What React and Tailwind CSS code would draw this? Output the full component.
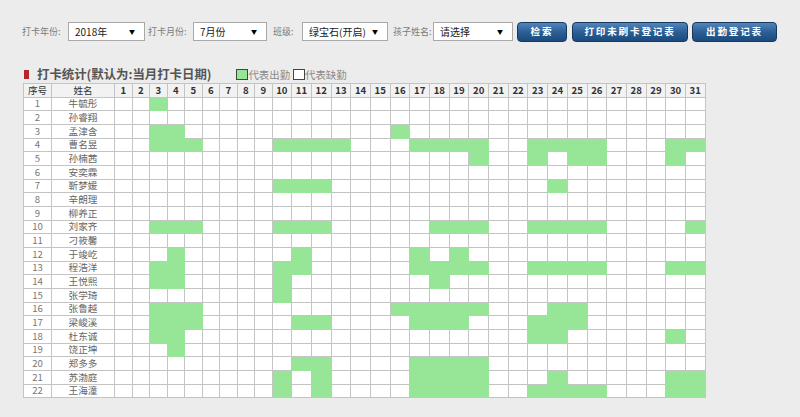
const DAYS = Array.from({ length: 31 }, (_, i) => i + 1);

const ROWS = [
  ['牛毓彤', [3]],
  ['孙睿翔', []],
  ['孟津含', [3, 4, 16]],
  ['曹名昱', [3, 4, 5, 10, 11, 12, 13, 17, 18, 19, 20, 23, 24, 25, 26, 30, 31]],
  ['孙楠茜', [20, 23, 25, 26, 30]],
  ['安奕霖', []],
  ['靳梦媛', [10, 11, 12, 24]],
  ['辛朗理', []],
  ['柳养正', []],
  ['刘家齐', [3, 4, 5, 10, 11, 12, 18, 19, 20, 23, 24, 25, 26, 31]],
  ['刁筱馨', []],
  ['于竣屹', [4, 11, 17, 19]],
  ['程浩洋', [3, 4, 10, 11, 17, 18, 19, 20, 23, 24, 25, 26, 30, 31]],
  ['王悦熙', [3, 4, 10, 18]],
  ['张学琦', [10]],
  ['张鲁越', [3, 4, 5, 16, 17, 18, 19, 20, 24, 25]],
  ['梁峻溪', [3, 4, 5, 11, 12, 17, 18, 19, 23, 24, 25]],
  ['杜东诚', [3, 4, 23, 24, 30]],
  ['饶正坤', [4]],
  ['郑多多', [11, 12, 17, 18, 19, 20]],
  ['苏渤庭', [10, 12, 17, 18, 19, 20, 24, 30, 31]],
  ['王海潼', [10, 12, 17, 18, 19, 20, 23, 24, 25, 26, 30, 31]],
];

function FakeSelect({ value, className }) {
  return (
    <div className={`h-[19px] bg-white border border-[#a9a9a9] flex items-center justify-between pl-[6px] pr-[9px] text-[10px] text-[#1a1a1a] ${className}`}>
      <span>{value}</span>
      <span className="text-[6px] text-black">▼</span>
    </div>
  );
}

function BlueButton({ children, className }) {
  return (
    <button className={`h-[20px] rounded-[4px] border border-[#17395e] bg-linear-to-b from-[#5185bb] via-[#2b5f95] to-[#1c4a7c] text-white text-[9.6px] font-semibold tracking-[1.8px] flex items-center justify-center ${className}`}>
      {children}
    </button>
  );
}

const cell = 'border-r border-b flex items-center justify-center';

export default function App() {
  return (
    <div className="w-[800px] h-[417px] bg-[#ececec] overflow-hidden font-['Noto_Sans_CJK_SC',sans-serif]">
      <div className="flex items-center pt-[22px] pl-[22px] h-[41px] text-[9px] text-[#7a7a7a] whitespace-nowrap">
        <span className="w-[46px]">打卡年份:</span>
        <FakeSelect value="2018年" className="w-[77px]" />
        <span className="ml-[3px] w-[45px]">打卡月份:</span>
        <FakeSelect value="7月份" className="w-[74px]" />
        <span className="ml-[6px] w-[29px]">班级:</span>
        <FakeSelect value="绿宝石(开启)" className="w-[86px]" />
        <span className="ml-[5px] w-[40px]">孩子姓名:</span>
        <FakeSelect value="请选择" className="w-[80px]" />
        <BlueButton className="ml-[4px] w-[50px]">检索</BlueButton>
        <BlueButton className="ml-[5px] w-[116px]">打印未刷卡登记表</BlueButton>
        <BlueButton className="ml-[4px] w-[85px]">出勤登记表</BlueButton>
      </div>

      <div className="mt-[25px] h-[17px] flex items-center pl-[24px] whitespace-nowrap">
        <span className="w-[5px] h-[9px] bg-[#b3262b]" />
        <span className="ml-[8px] text-[12.4px] font-bold text-[#555]">打卡统计(默认为:当月打卡日期)</span>
        <span className="ml-[25px] w-[12px] h-[11px] bg-[#97e597] border border-[#444]" />
        <span className="text-[10.4px] text-[#8a8a8a]">代表出勤</span>
        <span className="ml-[3px] w-[12px] h-[11px] bg-white border border-[#444]" />
        <span className="text-[10.4px] text-[#8a8a8a]">代表缺勤</span>
      </div>

      <div className="ml-[23px] w-max grid grid-cols-[28px_63px_repeat(9,17.5px)_repeat(22,19.7px)] auto-rows-[13.68px] border-l border-t border-[#c4c4c4] bg-white text-[9.6px] leading-none">
        <div className={`${cell} border-[#c4c4c4] bg-[#f2f2f2] text-[#333]`}>序号</div>
        <div className={`${cell} border-[#c4c4c4] bg-[#f2f2f2] text-[#333]`}>姓名</div>
        {DAYS.map((d) => (
          <div key={d} className={`${cell} border-[#c4c4c4] bg-[#f2f2f2] text-[#333] font-bold`}>
            {d}
          </div>
        ))}
        {ROWS.map(([name, days], i) => (
          <div key={name} className="contents">
            <div className={`${cell} border-[#c4c4c4] text-[#777]`}>{i + 1}</div>
            <div className={`${cell} border-[#c4c4c4] text-[#666]`}>{name}</div>
            {DAYS.map((d) =>
              days.includes(d) ? (
                <div key={d} className={`${cell} border-[#97e597] bg-[#97e597]`} />
              ) : (
                <div key={d} className={`${cell} border-[#c4c4c4]`} />
              )
            )}
          </div>
        ))}
      </div>
    </div>
  );
}
